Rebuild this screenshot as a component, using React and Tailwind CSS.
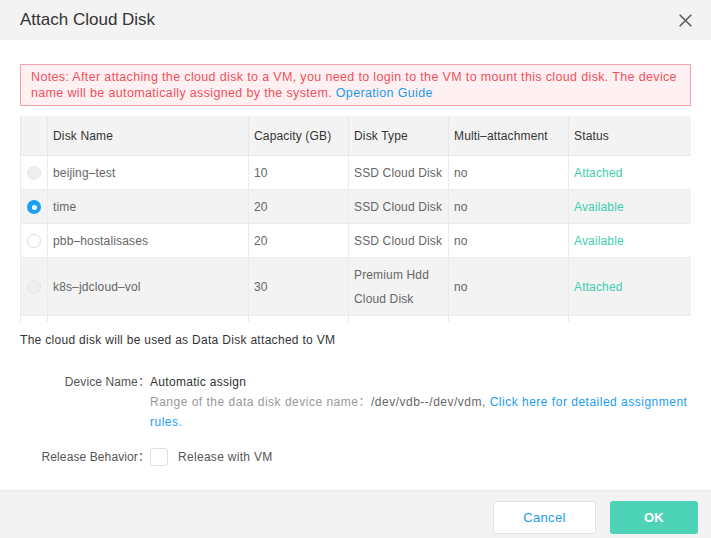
import React from "react";

const rows = [
  { name: "beijing–test", cap: "10", type: ["SSD Cloud Disk"], multi: "no", status: "Attached", radio: "disabled" },
  { name: "time", cap: "20", type: ["SSD Cloud Disk"], multi: "no", status: "Available", radio: "checked" },
  { name: "pbb–hostalisases", cap: "20", type: ["SSD Cloud Disk"], multi: "no", status: "Available", radio: "empty" },
  { name: "k8s–jdcloud–vol", cap: "30", type: ["Premium Hdd", "Cloud Disk"], multi: "no", status: "Attached", radio: "disabled" },
];

function Radio({ state }) {
  if (state === "checked") {
    return (
      <span className="flex h-[14px] w-[14px] items-center justify-center rounded-full bg-[#1a9ff5]">
        <span className="h-[5px] w-[5px] rounded-full bg-white" />
      </span>
    );
  }
  if (state === "disabled") {
    return <span className="block h-[14px] w-[14px] rounded-full border border-[#e6e6e6] bg-[#eeeeee]" />;
  }
  return <span className="block h-[14px] w-[14px] rounded-full border border-[#dcdcdc] bg-white" />;
}

const td = "whitespace-nowrap border-x border-b border-[#ebebeb] px-[5px] pt-[5px] pb-[4px] leading-6 align-middle";
const th = "whitespace-nowrap border-x border-b border-[#e8e8e8] px-[5px] pt-2 pb-[7px] text-left font-normal leading-6";

export default function App() {
  return (
    <div
      className="flex h-[538px] w-[711px] flex-col bg-white tracking-[0.3px] text-[#333]"
      style={{ fontFamily: '"Liberation Sans", "Noto Sans CJK SC", sans-serif' }}
    >
      <div className="flex h-10 shrink-0 items-center justify-between bg-[#f3f3f3] pl-5 pr-[19px]">
        <span className="text-[17px] tracking-normal text-[#333]">Attach Cloud Disk</span>
        <svg width="13" height="13" viewBox="0 0 13 13" fill="none">
          <path d="M0.7 0.7L12.3 12.3M12.3 0.7L0.7 12.3" stroke="#555" strokeWidth="1.5" />
        </svg>
      </div>

      <div className="flex-1 px-5 pt-6">
        <div className="border border-[#f2a2aa] bg-[#fff0f2] px-[10px] py-1 text-[12.5px] leading-4 tracking-[0.35px] text-[#f0505e]">
          <div className="whitespace-nowrap">
            Notes: After attaching the cloud disk to a VM, you need to login to the VM to mount this cloud disk. The device
          </div>
          <div>
            name will be automatically assigned by the system. <span className="text-[#1a9cf0]">Operation Guide</span>
          </div>
        </div>

        <div className="mt-[10px] h-[206px] w-[671px] overflow-hidden">
          <table className="w-[671px] table-fixed border-collapse text-[12px] tracking-[0.15px]">
            <colgroup>
              <col className="w-[27px]" />
              <col className="w-[201px]" />
              <col className="w-[100px]" />
              <col className="w-[100px]" />
              <col className="w-[120px]" />
              <col className="w-[123px]" />
            </colgroup>
            <thead>
              <tr className="bg-[#f3f3f3] text-[#333]">
                <th className="border-x border-b border-[#e8e8e8]" />
                <th className={th}>Disk Name</th>
                <th className={th}>Capacity (GB)</th>
                <th className={th}>Disk Type</th>
                <th className={th}>Multi–attachment</th>
                <th className={th}>Status</th>
              </tr>
            </thead>
            <tbody>
              {rows.map((r, i) => (
                <tr key={r.name} className={i % 2 === 1 ? "bg-[#f3f3f3] text-[#666]" : "bg-white text-[#666]"}>
                  <td className={td}>
                    <div className="flex justify-center">
                      <Radio state={r.radio} />
                    </div>
                  </td>
                  <td className={td}>{r.name}</td>
                  <td className={td}>{r.cap}</td>
                  <td className={td}>
                    {r.type.map((t) => (
                      <div key={t}>{t}</div>
                    ))}
                  </td>
                  <td className={td}>{r.multi}</td>
                  <td className={td + " text-[#3ecfae]"}>{r.status}</td>
                </tr>
              ))}
              <tr className="h-[34px] bg-white">
                <td className="border-x border-[#ebebeb]" />
                <td className="border-x border-[#ebebeb]" />
                <td className="border-x border-[#ebebeb]" />
                <td className="border-x border-[#ebebeb]" />
                <td className="border-x border-[#ebebeb]" />
                <td className="border-x border-[#ebebeb]" />
              </tr>
            </tbody>
          </table>
        </div>

        <div className="mt-[9px] text-[12px] leading-[18px] text-[#333]">
          The cloud disk will be used as Data Disk attached to VM
        </div>

        <div className="mt-[23px] flex text-[12px] leading-5">
          <div className="w-[130px] shrink-0 text-right tracking-[0.1px] text-[#555]">Device Name：</div>
          <div>
            <div className="text-[#333]">Automatic assign</div>
            <div className="whitespace-nowrap tracking-[0.5px] text-[#999]">
              Range of the data disk device name：<span className="text-[#666]">/dev/vdb--/dev/vdm,</span>{" "}
              <span className="text-[#1a9cf0]">Click here for detailed assignment</span>
            </div>
            <div className="tracking-[0.5px] text-[#1a9cf0]">rules.</div>
          </div>
        </div>

        <div className="mt-[15px] flex items-center text-[12px] leading-5">
          <div className="w-[130px] shrink-0 text-right tracking-[0.1px] text-[#555]">Release Behavior：</div>
          <span className="block h-[18px] w-[18px] rounded-[3px] border border-[#dcdfe3] bg-white" />
          <span className="ml-[10px] text-[#555]">Release with VM</span>
        </div>
      </div>

      <div className="flex h-12 shrink-0 items-start justify-end gap-[14px] border-t border-[#ececec] bg-[#f3f3f3] pr-[13px] pt-[10px]">
        <button className="h-[33px] w-[103px] rounded-[3px] border border-[#e3e3e3] bg-white text-[13px] text-[#1a9cf0]">
          Cancel
        </button>
        <button className="h-[33px] w-[88px] rounded-[3px] bg-[#4dd4b6] text-[13px] font-bold text-white">
          OK
        </button>
      </div>
    </div>
  );
}
